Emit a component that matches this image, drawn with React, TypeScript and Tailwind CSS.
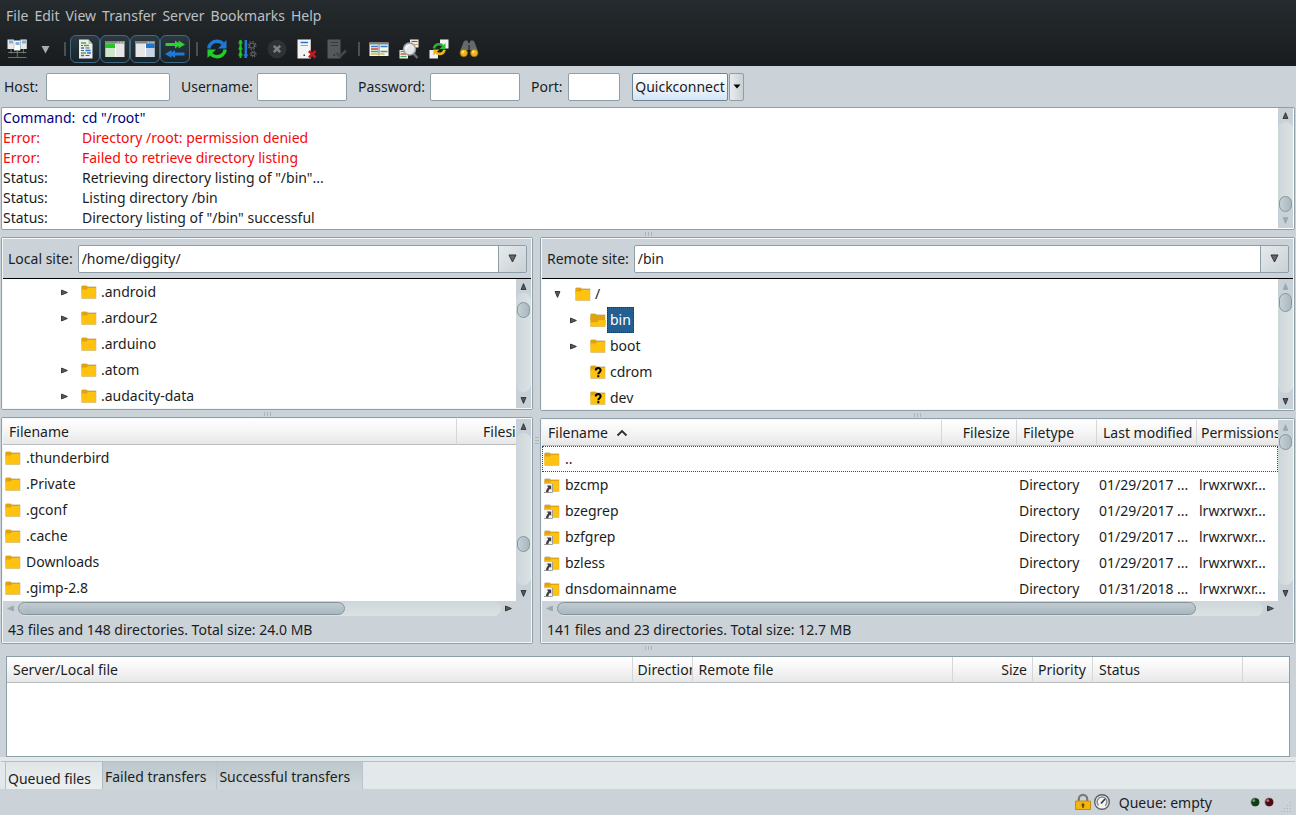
import React from "react";

type Kind = "folder" | "open" | "unknown" | "link";

function FolderIcon({ kind = "folder" }: { kind?: Kind }) {
  return (
    <svg width="16" height="16" viewBox="0 0 16 16" className="shrink-0" aria-hidden="true">
      <path d="M.5 2.200 1.200 1.400H5.600L6.800 2.600H15.300V14.800H.5z" fill="#c3b88a" />
      <path d="M.5 2.400 1.200 2H5.400L6.600 3H14.800V8H.5z" fill="#e2a210" />
      {kind === "open" ? (
        <>
          <path d="M.5 5h14.300v9.200H.5z" fill="#e2a210" />
          <path d="M.5 10.200H7L9 8h6.900v5l-1.100 1.200H.5z" fill="#ffc20e" />
        </>
      ) : (
        <path d="M.5 5.400h5.200L7 4h7.800v10.200H.5z" fill="#ffc20e" />
      )}
      {kind === "unknown" && (
        <g fill="none" stroke="#000" strokeWidth="2">
          <path d="M5.800 6.600c0-3.400 5-3.200 4.800-.2-.1 1.800-2.300 1.800-2.300 3.800" />
          <path d="M8.300 11.200v2" />
        </g>
      )}
      {kind === "link" && (
        <>
          <path d="M0 7h8.500v9H0z" fill="#f4f4f4" />
          <path d="M8.500 7v8.500H0" fill="none" stroke="#a0a0a0" />
          <path d="M3 8.500h4.200v4.300L6 11.800c-1 .8-1.600 1.900-1.600 3.500H2c0-2 .8-3.400 2.200-4.900z" fill="#3c3c3c" />
        </>
      )}
    </svg>
  );
}

function Tri({ dir, dim = false }: { dir: "up" | "down" | "left" | "right"; dim?: boolean }) {
  const paths = {
    up: "M4 .8 6.800 7.500H1.200z",
    down: "M4 7.300 6.800.600H1.200z",
    left: "M.8 4 7.500 1.200V6.800z",
    right: "M7.300 4 .6 1.200V6.800z",
  };
  return (
    <svg width="7" height="7" viewBox="0 0 8 8" aria-hidden="true">
      <path d={paths[dir]} fill={dim ? "#9aa9b0" : "#5a5a5a"} stroke={dim ? "#9aa9b0" : "#2a2a2a"} strokeWidth="1" />
    </svg>
  );
}

interface BarProps {
  before: number;
  thumb: number;
  after: number;
  startDim?: boolean;
  endDim?: boolean;
}

function VBar({ before, thumb, after, startDim, endDim }: BarProps) {
  return (
    <div className="flex w-[15px] shrink-0 flex-col bg-[#c8d1d7]">
      <button type="button" aria-label="Scroll up" className="flex h-3.5 items-center justify-center">
        <Tri dir="up" dim={startDim} />
      </button>
      <div className="flex flex-1 flex-col rounded-full bg-linear-to-r from-[#cdd6d9] to-[#dbe2e4] px-px">
        <div style={{ flexGrow: before }} />
        <div style={{ height: thumb }} className="shrink-0 rounded-full border border-[#84949c] bg-linear-to-r from-[#c6d0d5] to-[#a9b8bf]" />
        <div style={{ flexGrow: after }} />
      </div>
      <button type="button" aria-label="Scroll down" className="flex h-4 items-center justify-center">
        <Tri dir="down" dim={endDim} />
      </button>
    </div>
  );
}

function HBar({ thumb, after }: { thumb: number; after: number }) {
  return (
    <div className="flex h-[15px] pr-[15px]">
      <button type="button" aria-label="Scroll left" className="flex w-[15px] items-center justify-center">
        <Tri dir="left" dim />
      </button>
      <div className="flex flex-1 rounded-full bg-linear-to-b from-[#cdd6d9] to-[#dbe2e4] py-px">
        <div style={{ flexGrow: thumb }} className="rounded-full border border-[#84949c] bg-linear-to-b from-[#c0cbd0] to-[#a9b8bf]" />
        <div style={{ flexGrow: after }} />
      </div>
      <button type="button" aria-label="Scroll right" className="flex w-[15px] items-center justify-center">
        <Tri dir="right" />
      </button>
    </div>
  );
}

function Svg({ children }: { children: React.ReactNode }) {
  return (
    <svg width="20" height="20" viewBox="0 0 20 20" aria-hidden="true">
      {children}
    </svg>
  );
}

const ServersIcon = () => (
  <Svg>
    <path d="M.5.500h6.500v9.500H.5zM13.300.500h6.500v9.500h-6.500z" fill="#e9e9e9" />
    <path d="M7 1.500h6.300v10H7z" fill="#fff" />
    <path d="M2 1.500h4v3H2zM15 1.500h4v3h-4zM8.500 3h4v3h-4z" fill="#7fb0e2" />
    <path d="M7 1.500v9M13.300 1.500v9" stroke="#b0b0b0" strokeWidth=".6" />
    <path d="M4 10v3M10.300 12v6M16.500 10v3M1 13.500h18.500M1 18.500h18.500" stroke="#6a6e70" fill="none" />
    <path d="M3.300 12.800h1.500v1.500H3.300zM9.600 12.800h1.500v1.500H9.600zM15.800 12.800h1.500v1.500h-1.500z" fill="#2fae3b" />
  </Svg>
);

const LogIcon = () => (
  <Svg>
    <path d="M4 .500h9.500l4 4.500v14.500H4z" fill="#ececec" />
    <path d="M13.500.500v4.500h4z" fill="#bdbdbd" />
    <path d="M6 4h5M9 6.500h5M6 14h5" stroke="#50a83f" strokeWidth="1.300" />
    <path d="M6 9h3M10.500 11.500h5M12 14h4M6 16.500h3" stroke="#2879c8" strokeWidth="1.300" />
    <path d="M6 6.500h2M10.500 9h4M6 11.500h3M10.500 16.500h4" stroke="#56606a" strokeWidth="1.200" />
  </Svg>
);

const LocalTreeIcon = () => (
  <Svg>
    <path d="M.5 2h19v16H.5z" fill="#e6e6e6" />
    <path d="M.5 2h19v2.500H.5z" fill="#858585" />
    <path d="M.5 4.500h9.500v4.500H.5z" fill="#27c427" />
    <path d="M.5 9h9.500v9H.5z" fill="#cce6c9" />
    <path d="M10.500 5v13" stroke="#fff" />
    <path d="M12.500 3.300h1.500M15 3.300h1.500M17.400 3.300h1.500" stroke="#ccc" />
  </Svg>
);

const RemoteTreeIcon = () => (
  <Svg>
    <path d="M.5 2h19v16H.5z" fill="#e6e6e6" />
    <path d="M.5 2h19v2.500H.5z" fill="#858585" />
    <path d="M11 4.500h8.500v4.500H11z" fill="#1f76d0" />
    <path d="M11 9h8.500v9H11z" fill="#c6d5e6" />
    <path d="M10.500 5v13" stroke="#fff" />
    <path d="M12.500 3.300h1.500M15 3.300h1.500M17.400 3.300h1.500" stroke="#ccc" />
  </Svg>
);

const QueueIcon = () => (
  <Svg>
    <path d="M.5 4h9.500V1.500L13.500 4V1.500L20 5.500l-6.500 4V7L10 9.500V7H.5z" fill="#2fd02f" />
    <path d="M19.500 13.500H10V11L6.500 13.500V11L0 15l6.500 4v-2.500L10 19v-2.500h9.500z" fill="#1f7ad6" />
  </Svg>
);

const RefreshIcon = () => (
  <Svg>
    <path d="M1.800 9.500C2.200 4.800 6.200 2.300 10 2.300c2.600 0 4.500.9 6 2.500" fill="none" stroke="#1f7ad6" strokeWidth="3.400" />
    <path d="M19.500 1v8.500H11z" fill="#1f7ad6" />
    <path d="M18.200 10.500c-.4 4.700-4.400 7.200-8.200 7.200-2.600 0-4.500-.9-6-2.500" fill="none" stroke="#22cf22" strokeWidth="3.400" />
    <path d="M.5 19v-8.500H9z" fill="#22cf22" />
  </Svg>
);

const FilterIcon = () => (
  <Svg>
    <path d="M3.500 1v18" stroke="#22c52a" strokeWidth="2" />
    <path d="M3.500.500 6 4.500H1zM3.500 6.500l2.500 4H1zM3.500 12.500l2.500 4H1z" fill="#22c52a" />
    <path d="M8.800 1v18" stroke="#1f7ad6" strokeWidth="2.400" />
    <path d="M8.800 19.500l-2.600-4h5.200z" fill="#1f7ad6" />
    <g fill="none" stroke="#606567">
      <circle cx="15" cy="6.500" r="2.500" strokeWidth="1.200" />
      <circle cx="15" cy="6.500" r="3.900" strokeWidth="1.200" strokeDasharray="1.500 1.560" />
      <circle cx="16.200" cy="15" r="1.700" strokeWidth="1.100" />
      <circle cx="16.200" cy="15" r="2.900" strokeWidth="1.100" strokeDasharray="1.200 1.080" />
    </g>
  </Svg>
);

const CancelIcon = () => (
  <Svg>
    <circle cx="10" cy="10" r="9.300" fill="#2f3233" />
    <path d="m6.800 6.800 6.400 6.400M13.200 6.800l-6.400 6.400" stroke="#7d8082" strokeWidth="2.600" />
  </Svg>
);

const DisconnectIcon = () => (
  <Svg>
    <path d="M.500.500h13v19H.5z" fill="#f4f4f4" />
    <path d="M13.500.500v19" stroke="#c4c4c4" />
    <path d="M3.500 3.500H11" stroke="#1f6fd0" strokeWidth="1.400" />
    <path d="M3.500 6.500H11" stroke="#7aa9de" />
    <path d="M6.500 15.500H8V17H6.500z" fill="#333" />
    <path d="m12 12 6.500 6.500M18.500 12 12 18.500" stroke="#c41820" strokeWidth="2.700" />
  </Svg>
);

const ReconnectIcon = () => (
  <Svg>
    <path d="M.500.500h13v19H.5z" fill="#55595b" />
    <path d="M3.500 3.500H11M3.500 6.500H11" stroke="#363a3c" strokeWidth="1.200" />
    <path d="M6.500 15.500H8V17H6.500z" fill="#2a2d2f" />
    <path d="m9.500 14 3.500 3.500 6-6" stroke="#42474a" strokeWidth="2.600" fill="none" />
  </Svg>
);

const CompareIcon = () => (
  <Svg>
    <path d="M.5 3.500h19v13.500H.5z" fill="#f4f4f4" />
    <path d="M.5 3h19v2.500H.5z" fill="#7d8082" />
    <path d="M2 7.500h7M11.500 7.500h7" stroke="#2f7dd0" strokeWidth="1.500" />
    <path d="M2 10h7" stroke="#d23a3a" strokeWidth="1.500" />
    <path d="M2 12.500h7M11.500 12.500h7" stroke="#3fae3f" strokeWidth="1.500" />
    <path d="M2 15h7M11.500 15h4" stroke="#d9b93d" strokeWidth="1.300" />
    <path d="M10 5.500v11" stroke="#6f7274" />
  </Svg>
);

const FindIcon = () => (
  <Svg>
    <path d="M11 .500h8.500v8H11z" fill="#f2f2f2" />
    <path d="M12.500 2.500h6" stroke="#cf3030" strokeWidth="1.200" />
    <path d="M15 5.500h4" stroke="#d7ab2e" strokeWidth="1.200" />
    <path d="M.5 11h8.500v8.500H.5z" fill="#f2f2f2" />
    <path d="M1.500 12.500h4" stroke="#3fae3f" strokeWidth="1.200" />
    <path d="M1.500 15h6" stroke="#cf3030" strokeWidth="1.200" />
    <path d="M1.500 17.500h6" stroke="#3fae3f" strokeWidth="1.200" />
    <path d="m14 14 4.500 5" stroke="#6b6d6e" strokeWidth="2.600" />
    <circle cx="10.500" cy="10" r="6" fill="#e4e7e8" stroke="#9c9fa1" strokeWidth="1.500" />
    <path d="M7 10a3.500 3.500 0 0 1 3.500-3.500" stroke="#fff" fill="none" strokeWidth="1.200" />
  </Svg>
);

const SyncIcon = () => (
  <Svg>
    <path d="M11 .500h8.500v9H11zM.5 11h8.500v8.500H.5z" fill="#f2f2f2" />
    <circle cx="10.500" cy="10" r="4" fill="#1c2022" />
    <path d="M5 9.500C5.500 6.800 7.800 5.300 10.300 5.300c1.500 0 2.600.5 3.400 1.300" fill="none" stroke="#2fae2f" strokeWidth="2.600" />
    <path d="M16.500 4v6h-6z" fill="#2fc02f" />
    <path d="M15.500 10.700c-.5 2.700-2.700 4.200-5.200 4.200-1.400 0-2.500-.5-3.300-1.300" fill="none" stroke="#f0b80f" strokeWidth="2.600" />
    <path d="M4.300 16.500v-6h6z" fill="#f0b80f" />
  </Svg>
);

const BinocularsIcon = () => (
  <Svg>
    <path d="M4.500 3 6 1.500h2.500L9.300 4h1.400l.8-2.500H14L15.500 3l3.700 10v2h-6.700V11h-5v4H.8v-2z" fill="#66696b" />
    <path d="M9 6h2v5H9z" fill="#3f4244" />
    <circle cx="4.800" cy="14" r="3.700" fill="#f6b512" stroke="#8a6a16" strokeWidth=".8" />
    <circle cx="15.200" cy="14" r="3.700" fill="#f6b512" stroke="#8a6a16" strokeWidth=".8" />
    <circle cx="3.900" cy="13" r="1.300" fill="#ffe37a" />
    <circle cx="14.300" cy="13" r="1.300" fill="#ffe37a" />
  </Svg>
);

function Tool({ label, pressed, children }: { label: string; pressed?: boolean; children: React.ReactNode }) {
  return (
    <button
      type="button"
      aria-label={label}
      aria-pressed={pressed}
      className={
        pressed
          ? "flex h-7 w-[30px] items-center justify-center rounded-md border border-[#3e6a86] bg-linear-to-b from-[#2b3942] to-[#1b2328]"
          : "flex h-7 w-[30px] items-center justify-center"
      }
    >
      {children}
    </button>
  );
}

const ToolSeparator = () => (
  <div className="flex w-3 justify-center pl-0.5">
    <div className="h-3.5 w-0.5 bg-[#4a4f52]" />
  </div>
);

function Field({ id, label, labelClass, inputClass }: { id: string; label: string; labelClass: string; inputClass: string }) {
  return (
    <>
      <label htmlFor={id} className={labelClass}>
        {label}
      </label>
      <input id={id} className={`h-7 rounded-xs border border-[#8d9ea6] bg-white px-1 outline-none ${inputClass}`} />
    </>
  );
}

function Panel({ children, className = "" }: { children: React.ReactNode; className?: string }) {
  return (
    <section className={`rounded-xs border border-[#8fa0a8] ${className}`}>
      <div className="flex h-full flex-col border border-[#f4f7f8]">{children}</div>
    </section>
  );
}

function SiteBar({ id, label, value }: { id: string; label: string; value: string }) {
  return (
    <div className="flex h-10 items-center border-b border-black pr-1 pl-[5px]">
      <label htmlFor={id} className="pr-[5px] whitespace-nowrap">
        {label}
      </label>
      <div className="flex h-7 min-w-0 flex-1 rounded-xs border border-[#8d9ea6] bg-white">
        <input id={id} defaultValue={value} className="min-w-0 flex-1 px-[3px] outline-none" />
        <button
          type="button"
          aria-label={`${label} history`}
          className="flex w-7 items-center justify-center border-l border-[#8d9ea6] bg-linear-to-br from-[#e6eaec] to-[#c8d1d6]"
        >
          <svg width="9" height="9" viewBox="0 0 9 9" aria-hidden="true">
            <path d="M1 1h7L4.500 8z" fill="#666" stroke="#333" />
          </svg>
        </button>
      </div>
    </div>
  );
}

const GripH = ({ className }: { className: string }) => (
  <div className={`flex items-center justify-center gap-0.5 ${className}`}>
    <i className="h-1 w-px bg-[#a9b6bc]" />
    <i className="h-1 w-px bg-[#a9b6bc]" />
    <i className="h-1 w-px bg-[#a9b6bc]" />
  </div>
);

function Th({ children, className = "px-1.5 border-r" }: { children?: React.ReactNode; className?: string }) {
  return (
    <th
      scope="col"
      className={`h-[26px] overflow-hidden border-b border-r-[#d4d6d7] border-b-[#b9bdbf] bg-linear-to-b from-white via-[#f5f5f5] to-[#e7e7e7] text-left font-normal whitespace-nowrap ${className}`}
    >
      {children}
    </th>
  );
}

const log = [
  { kind: "Command:", text: 'cd "/root"', color: "text-[#00007f]" },
  { kind: "Error:", text: "Directory /root: permission denied", color: "text-[#f80808]" },
  { kind: "Error:", text: "Failed to retrieve directory listing", color: "text-[#f80808]" },
  { kind: "Status:", text: 'Retrieving directory listing of "/bin"...', color: "" },
  { kind: "Status:", text: "Listing directory /bin", color: "" },
  { kind: "Status:", text: 'Directory listing of "/bin" successful', color: "" },
];

const localTree = [
  { name: ".android", expandable: true },
  { name: ".ardour2", expandable: true },
  { name: ".arduino", expandable: false },
  { name: ".atom", expandable: true },
  { name: ".audacity-data", expandable: true },
];

const remoteTree: { name: string; kind: Kind; arrow: boolean }[] = [
  { name: "bin", kind: "open", arrow: true },
  { name: "boot", kind: "folder", arrow: true },
  { name: "cdrom", kind: "unknown", arrow: false },
  { name: "dev", kind: "unknown", arrow: false },
];

const localFiles = [".thunderbird", ".Private", ".gconf", ".cache", "Downloads", ".gimp-2.8"];

const remoteFiles = [
  ["bzcmp", "01/29/2017 ..."],
  ["bzegrep", "01/29/2017 ..."],
  ["bzfgrep", "01/29/2017 ..."],
  ["bzless", "01/29/2017 ..."],
  ["dnsdomainname", "01/31/2018 ..."],
];

export default function App() {
  return (
    <div className="flex min-h-screen flex-col bg-[#cbd3d9] font-['Noto_Sans',sans-serif] text-[14px] leading-5 text-[#1b1d1e]">
      <header className="bg-linear-to-b from-[#252b2e] to-[#191c1e]">
        <nav className="flex h-8 items-center gap-1.5 px-1.5 text-[#bcc0c2]">
          {["File", "Edit", "View", "Transfer", "Server", "Bookmarks", "Help"].map((m) => (
            <button type="button" key={m}>
              {m}
            </button>
          ))}
        </nav>
        <div className="flex h-[34px] items-center pl-0.5">
          <Tool label="Site manager"><ServersIcon /></Tool>
          <button type="button" aria-label="Site list" className="flex w-[26px] items-center justify-center">
            <svg width="9" height="9" viewBox="0 0 9 9" aria-hidden="true">
              <path d="M.5 1h8l-4 7.500z" fill="#a9abac" />
            </svg>
          </button>
          <ToolSeparator />
          <Tool label="Toggle message log" pressed><LogIcon /></Tool>
          <Tool label="Toggle local tree" pressed><LocalTreeIcon /></Tool>
          <Tool label="Toggle remote tree" pressed><RemoteTreeIcon /></Tool>
          <Tool label="Toggle queue" pressed><QueueIcon /></Tool>
          <ToolSeparator />
          <Tool label="Refresh"><RefreshIcon /></Tool>
          <Tool label="Process queue"><FilterIcon /></Tool>
          <Tool label="Cancel"><CancelIcon /></Tool>
          <Tool label="Disconnect"><DisconnectIcon /></Tool>
          <Tool label="Reconnect"><ReconnectIcon /></Tool>
          <ToolSeparator />
          <Tool label="Compare directories"><CompareIcon /></Tool>
          <Tool label="Filters"><FindIcon /></Tool>
          <Tool label="Synchronized browsing"><SyncIcon /></Tool>
          <Tool label="Search"><BinocularsIcon /></Tool>
        </div>
      </header>

      <form className="flex h-[41px] items-center pl-1" onSubmit={(e) => e.preventDefault()}>
        <Field id="host" label="Host:" labelClass="w-[42px]" inputClass="w-[124px]" />
        <Field id="user" label="Username:" labelClass="ml-[11px] w-[76px]" inputClass="w-[90px]" />
        <Field id="pass" label="Password:" labelClass="ml-[11px] w-[72px]" inputClass="w-[90px]" />
        <Field id="port" label="Port:" labelClass="ml-[11px] w-[37px]" inputClass="w-[52px]" />
        <button type="submit" className="ml-3 h-7 w-24 rounded-xs border border-[#6e8797] bg-linear-to-b from-white via-[#eff5fb] to-[#d3e5f6] whitespace-nowrap">
          Quickconnect
        </button>
        <button type="button" aria-label="Quickconnect history" className="ml-px flex h-7 w-[15px] items-center justify-center rounded-xs border border-[#8d9ea6] bg-linear-to-r from-[#e8ecee] to-[#c9d1d6]">
          <svg width="8" height="5" viewBox="0 0 8 5" aria-hidden="true">
            <path d="M.5.500h7L4 4.500z" fill="#000" />
          </svg>
        </button>
      </form>

      <section className="ml-px mr-px flex h-[123px] rounded-xs border border-[#8fa0a8] bg-white pr-px pb-px">
        <table className="h-[120px] flex-1 self-start">
          <tbody className="block">
            {log.map((l, i) => (
              <tr key={i} className={`flex h-5 ${l.color}`}>
                <td className="w-20 shrink-0 pl-px">{l.kind}</td>
                <td>{l.text}</td>
              </tr>
            ))}
          </tbody>
        </table>
        <VBar before={1} thumb={16} after={0} endDim />
      </section>
      <GripH className="h-[7px]" />

      <main className="grid grid-cols-[532fr_7px_755fr] px-px">
        <div className="flex min-w-0 flex-col">
          <Panel>
            <SiteBar id="local" label="Local site:" value="/home/diggity/" />
            <div className="flex h-[129px]">
              <ul className="flex-1 overflow-hidden bg-white">
                {localTree.map((t) => (
                  <li key={t.name} className="flex h-[26px] items-center pl-[58px]">
                    <span className="flex w-5">{t.expandable && <Tri dir="right" />}</span>
                    <FolderIcon />
                    <span className="pl-1">{t.name}</span>
                  </li>
                ))}
              </ul>
              <VBar before={9} thumb={16} after={78} />
            </div>
          </Panel>
          <GripH className="h-[7px]" />
          <Panel className="flex-1">
            <div className="flex h-[182px]">
              <div className="min-w-0 flex-1 overflow-hidden bg-white">
                <table className="w-full table-fixed border-separate border-spacing-0">
                  <colgroup>
                    <col />
                    <col className="w-[59px]" />
                  </colgroup>
                  <thead>
                    <tr>
                      <Th>Filename</Th>
                      <Th className="pl-[26px]">Filesize</Th>
                    </tr>
                  </thead>
                  <tbody>
                    {localFiles.map((f) => (
                      <tr key={f}>
                        <td className="h-[26px] p-0">
                          <span className="flex items-center gap-[5px] pl-0.5">
                            <FolderIcon />
                            {f}
                          </span>
                        </td>
                        <td />
                      </tr>
                    ))}
                  </tbody>
                </table>
              </div>
              <VBar before={104} thumb={16} after={33} />
            </div>
            <HBar thumb={328} after={157} />
            <p className="flex flex-1 items-center px-[5px] pt-px">43 files and 148 directories. Total size: 24.0 MB</p>
          </Panel>
        </div>

        <div className="flex flex-col items-center justify-center gap-0.5">
          <i className="h-px w-1 bg-[#a9b6bc]" />
          <i className="h-px w-1 bg-[#a9b6bc]" />
          <i className="h-px w-1 bg-[#a9b6bc]" />
        </div>

        <div className="flex min-w-0 flex-col">
          <Panel>
            <SiteBar id="remote" label="Remote site:" value="/bin" />
            <div className="flex h-[130px]">
              <ul className="flex-1 overflow-hidden bg-white pt-0.5">
                <li className="flex h-[26px] items-center pl-3">
                  <span className="flex w-[21px]">
                    <Tri dir="down" />
                  </span>
                  <FolderIcon />
                  <span className="pl-1">/</span>
                </li>
                {remoteTree.map((t) => (
                  <li key={t.name} className="flex h-[26px] items-center pl-7">
                    <span className="flex w-5">{t.arrow && <Tri dir="right" />}</span>
                    <FolderIcon kind={t.kind} />
                    <span
                      className={
                        t.name === "bin"
                          ? "ml-px flex h-[26px] items-center border border-dotted border-[#0d3a63] bg-[#245f92] px-0.5 text-white"
                          : "pl-1"
                      }
                    >
                      {t.name}
                    </span>
                  </li>
                ))}
              </ul>
              <VBar before={0} thumb={19} after={1} startDim />
            </div>
          </Panel>
          <GripH className="h-[7px]" />
          <Panel>
            <div className="flex h-[181px]">
              <div className="min-w-0 flex-1 overflow-hidden bg-white">
                <table className="w-full table-fixed border-separate border-spacing-0">
                  <colgroup>
                    <col />
                    <col className="w-[75px]" />
                    <col className="w-20" />
                    <col className="w-[100px]" />
                    <col className="w-[81px]" />
                  </colgroup>
                  <thead>
                    <tr>
                      <Th>
                        <span className="flex items-center gap-2">
                          Filename
                          <svg width="12" height="8" viewBox="0 0 12 8" aria-hidden="true">
                            <path d="m1.500 6.500 4.500-4.500 4.500 4.500" fill="none" stroke="#2c2f31" strokeWidth="1.800" />
                          </svg>
                        </span>
                      </Th>
                      <Th className="border-r px-1.5 text-right">Filesize</Th>
                      <Th>Filetype</Th>
                      <Th>Last modified</Th>
                      <Th className="pl-1">Permissions</Th>
                    </tr>
                  </thead>
                  <tbody>
                    <tr className="outline-1 -outline-offset-1 outline-[#1d4f80] outline-dotted">
                      <td className="h-[26px] p-0" colSpan={5}>
                        <span className="flex items-center gap-[5px] pl-0.5">
                          <FolderIcon />
                          ..
                        </span>
                      </td>
                    </tr>
                    {remoteFiles.map(([name, date]) => (
                      <tr key={name}>
                        <td className="h-[26px] p-0">
                          <span className="flex items-center gap-[5px] pl-0.5">
                            <FolderIcon kind="link" />
                            {name}
                          </span>
                        </td>
                        <td />
                        <td className="p-0 pl-0.5">Directory</td>
                        <td className="p-0 pl-0.5 whitespace-nowrap">{date}</td>
                        <td className="p-0 pl-0.5 whitespace-nowrap">lrwxrwxr...</td>
                      </tr>
                    ))}
                  </tbody>
                </table>
              </div>
              <VBar before={0} thumb={16} after={1} startDim />
            </div>
            <HBar thumb={640} after={67} />
            <p className="flex h-[26px] items-center px-[5px] pt-px">141 files and 23 directories. Total size: 12.7 MB</p>
          </Panel>
        </div>
      </main>
      <GripH className="h-[7px]" />

      <section className="mx-1.5 mt-[5px] min-h-[90px] flex-1 border border-[#8d9fa8] bg-white">
        <table className="w-full table-fixed border-separate border-spacing-0">
          <colgroup>
            <col className="w-[48.8%]" />
            <col className="w-[60px]" />
            <col />
            <col className="w-20" />
            <col className="w-[60px]" />
            <col className="w-[150px]" />
            <col className="w-[46px]" />
          </colgroup>
          <thead>
            <tr>
              <Th>Server/Local file</Th>
              <Th className="border-r pl-[5px]">Direction</Th>
              <Th>Remote file</Th>
              <Th className="border-r px-[5px] text-right">Size</Th>
              <Th className="border-r pl-[5px]">Priority</Th>
              <Th>Status</Th>
              <Th className="" />
            </tr>
          </thead>
        </table>
      </section>

      <div className="bg-[#e3e8eb]">
        <div className="mx-px h-[5px] border-b border-[#b3c0c5]" />
        <div role="tablist" className="flex h-[27px] pl-[5px]">
          <button type="button" role="tab" aria-selected="true" className="border-l border-[#b3c0c5] bg-linear-to-b from-[#e0e5e7] to-[#eceff0] pt-1.5 pr-[11px] pl-0.5">
            Queued files
          </button>
          <button type="button" role="tab" aria-selected="false" className="border-l border-[#aebcc2] bg-linear-to-b from-[#bcc8cd] to-[#cfd7da] pt-0.5 pr-2.5 pl-0.5">
            Failed transfers
          </button>
          <button type="button" role="tab" aria-selected="false" className="border-x border-[#bac6cb] bg-linear-to-b from-[#bcc8cd] to-[#cfd7da] pt-0.5 pr-3 pl-0.5">
            Successful transfers
          </button>
        </div>
      </div>

      <footer className="flex h-[26px] items-center">
        <div className="flex-1" />
        <svg width="16" height="18" viewBox="0 0 16 18" aria-hidden="true">
          <path d="M3.800 9V6a4.200 4.200 0 0 1 8.400 0v3" fill="none" stroke="#77797a" strokeWidth="2.200" />
          <path d="M.5 8h15v8.500H.5z" fill="#f5b50f" stroke="#c28e12" />
          <path d="M8 10.200a1.500 1.500 0 0 1 .9 2.700v1.900H7.100v-1.900A1.500 1.500 0 0 1 8 10.200z" fill="#5a4a1c" />
        </svg>
        <svg width="18" height="18" viewBox="0 0 18 18" className="ml-0.5" aria-hidden="true">
          <circle cx="9" cy="9" r="7.300" fill="#f3f3f3" stroke="#5c6062" strokeWidth="1.400" />
          <circle cx="9" cy="9" r="4.900" fill="none" stroke="#85898b" strokeWidth="1.500" strokeDasharray="23 8" transform="rotate(135 9 9)" />
          <path d="m8 10.500 4-4.500" stroke="#3a3d3f" strokeWidth="1.800" />
        </svg>
        <span className="pt-0.5 pr-8 pl-2">Queue: empty</span>
        <svg width="52" height="26" viewBox="0 0 52 26" aria-hidden="true">
          <circle cx="11" cy="13" r="4.600" fill="#9aa4a4" />
          <circle cx="11.300" cy="13.300" r="4" fill="#123d16" />
          <circle cx="9.800" cy="11.600" r="1.400" fill="#6f9a72" />
          <circle cx="25" cy="13" r="4.600" fill="#a49a9c" />
          <circle cx="25.300" cy="13.300" r="4" fill="#4d0c12" />
          <circle cx="23.800" cy="11.600" r="1.400" fill="#b07a80" />
          <g fill="#aab6bc">
            <path d="M46 13h1v1h-1zM43 16h1v1h-1zM46 16h1v1h-1zM40 19h1v1h-1zM43 19h1v1h-1zM46 19h1v1h-1zM37 22h1v1h-1zM40 22h1v1h-1zM43 22h1v1h-1zM46 22h1v1h-1z" />
          </g>
        </svg>
      </footer>
    </div>
  );
}
